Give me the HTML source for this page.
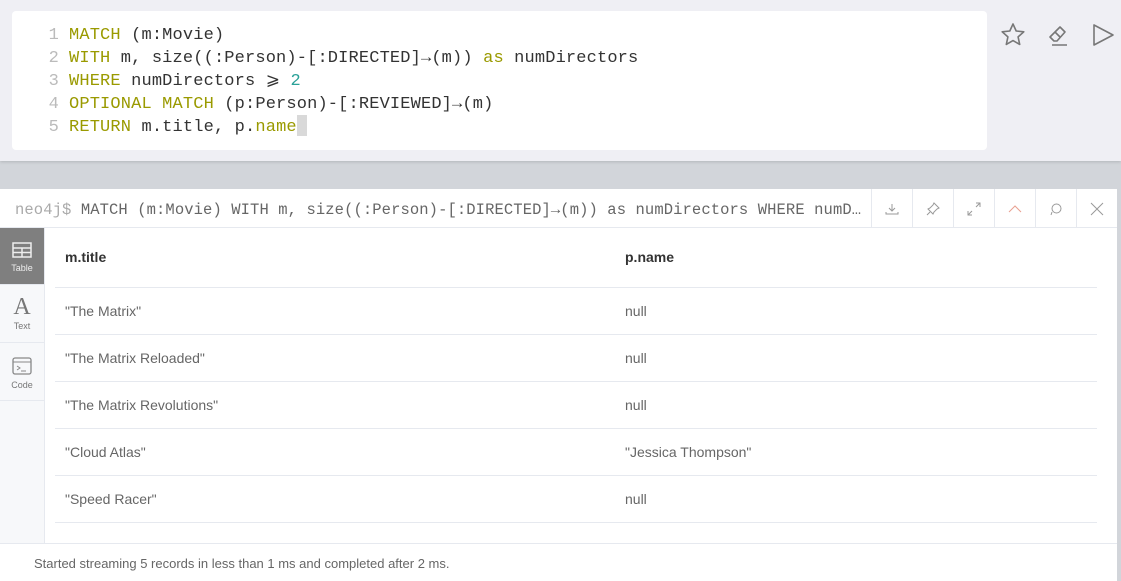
<!DOCTYPE html>
<html><head><meta charset="utf-8"><style>
*{margin:0;padding:0;box-sizing:border-box}
body{width:1121px;height:581px;overflow:hidden;background:#d2d5da;font-family:"Liberation Sans",sans-serif;position:relative}
.top{position:absolute;left:0;top:0;width:1121px;height:161px;background:#efeff4;box-shadow:0 1px 3px rgba(0,0,0,.15)}
.ed{position:absolute;left:12px;top:11px;width:975px;height:139px;background:#fff;border-radius:4px}
.code{position:absolute;left:0;top:13px;font-family:"Liberation Mono",monospace;font-size:17px;line-height:23px;color:#333;white-space:pre;letter-spacing:0.15px}
.ln{display:inline-block;width:57px;text-align:right;color:#bbb;padding-right:10px}
.k{color:#9a9a00}.n{color:#2aa198}
.cur{background:#d9d9d9;display:inline-block;width:10px;height:21px;vertical-align:-5px;margin-top:-4px}
.ic{position:absolute;top:22px}
.card{position:absolute;left:0;top:189px;width:1117px;height:392px;background:#fff}
.hdr{position:absolute;left:0;top:0;width:1117px;height:39px;border-bottom:1px solid #e6e9ef}
.q{position:absolute;left:15px;top:11px;font-family:"Liberation Mono",monospace;font-size:15.5px;color:#666;white-space:nowrap;width:853px;overflow:hidden;text-overflow:ellipsis;letter-spacing:0.1px}
.q span{color:#aaa}
.btn{position:absolute;top:0;width:41px;height:39px;border-left:1px solid #e6e9ef;display:flex;align-items:center;justify-content:center}
.side{position:absolute;left:0;top:39px;width:45px;height:315px;background:#f7f8fa;border-right:1px solid #e6e9ef}
.tab{height:58px;border-bottom:1px solid #e6e9ef;text-align:center;font-size:9px;color:#777;padding-top:14px}
.tab.a{background:#7f7f7f;color:#eee;height:57px}
.tab svg{display:block;margin:0 auto 5px}
table{position:absolute;left:55px;top:39px;width:1042px;border-collapse:collapse;font-size:14px;color:#666}
td,th{text-align:left;padding-left:10px;height:47px;border-bottom:1px solid #e6e9ef}
th{height:59px;color:#333;font-weight:bold}
td:first-child,th:first-child{width:560px}
.foot{position:absolute;left:0;top:354px;width:1117px;height:38px;border-top:1px solid #e6e9ef;font-size:13px;color:#666;padding:12px 0 0 34px}
</style></head><body>
<div class="top">
<div class="ed"><div class="code"><span class="ln">1</span><span class="k">MATCH</span> (m:Movie)
<span class="ln">2</span><span class="k">WITH</span> m, size((:Person)-[:DIRECTED]→(m)) <span class="k">as</span> numDirectors
<span class="ln">3</span><span class="k">WHERE</span> numDirectors ⩾ <span class="n">2</span>
<span class="ln">4</span><span class="k">OPTIONAL MATCH</span> (p:Person)-[:REVIEWED]→(m)
<span class="ln">5</span><span class="k">RETURN</span> m.title, p.<span class="k">name</span><span class="cur"></span></div></div>
<svg class="ic" style="left:1000px" width="26" height="26" viewBox="0 0 26 26"><path d="M13 2l3.2 7 7.6.8-5.7 5.1 1.6 7.5L13 18.6 6.3 22.4l1.6-7.5L2.2 9.8l7.6-.8z" fill="none" stroke="#777" stroke-width="1.6" stroke-linejoin="round"/></svg>
<svg class="ic" style="left:1045px" width="26" height="26" viewBox="0 0 26 26"><path d="M9 19l-4-4L15 5l5 5-8 9H9zM10 10l5 5M7 23h15" fill="none" stroke="#777" stroke-width="1.6" stroke-linejoin="round"/></svg>
<svg class="ic" style="left:1091px" width="24" height="26" viewBox="0 0 24 26"><path d="M3 3v20l19-10z" fill="none" stroke="#777" stroke-width="1.6" stroke-linejoin="round"/></svg>
</div>
<div class="card">
<div class="hdr"><div class="q"><span>neo4j$</span> MATCH (m:Movie) WITH m, size((:Person)-[:DIRECTED]→(m)) as numDirectors WHERE numDirectors ⩾ 2 OPTIONAL MATCH (p:Person)-[:REVIEWED]→(m) RETURN m.title, p.name</div>
<div class="btn" style="left:871px"><svg width="14" height="14"><path d="M7 2v7M4 6l3 3 3-3M1 10v2h12v-2" fill="none" stroke="#999"/></svg></div>
<div class="btn" style="left:912px"><svg width="14" height="14"><path d="M8 1l5 5-2 1-3 3-1 2-5-5 2-1 3-3zM4 10l-3 3" fill="none" stroke="#999"/></svg></div>
<div class="btn" style="left:953px"><svg width="14" height="14"><path d="M9 1h4v4M13 1L9 5M5 13H1V9M1 13l4-4" fill="none" stroke="#999"/></svg></div>
<div class="btn" style="left:994px"><svg width="14" height="14"><path d="M1 10l6-6 6 6" fill="none" stroke="#e8a090"/></svg></div>
<div class="btn" style="left:1035px"><svg width="14" height="14"><circle cx="7.5" cy="6.5" r="4.5" fill="none" stroke="#999"/><path d="M3 10l-1 3" stroke="#999"/></svg></div>
<div class="btn" style="left:1076px"><svg width="14" height="14"><path d="M1 1l12 12M13 1L1 13" stroke="#999"/></svg></div>
</div>
<div class="side">
<div class="tab a"><svg width="20" height="16"><rect x="1" y="1" width="18" height="14" fill="none" stroke="#eee" stroke-width="1.5"/><path d="M1 6h18M1 10.5h18M10 6v9" stroke="#eee" stroke-width="1.5"/></svg>Table</div>
<div class="tab" style="padding-top:10px"><div style="font-family:'Liberation Serif',serif;font-size:24px;line-height:24px;color:#777;margin-bottom:2px">A</div>Text</div>
<div class="tab"><svg width="20" height="18"><rect x="1" y="1" width="18" height="16" rx="2" fill="none" stroke="#888" stroke-width="1.3"/><path d="M1 5h18M5 9l3 2-3 2M9 14h5" fill="none" stroke="#888"/></svg>Code</div>
</div>
<table>
<tr><th>m.title</th><th>p.name</th></tr>
<tr><td>"The Matrix"</td><td>null</td></tr>
<tr><td>"The Matrix Reloaded"</td><td>null</td></tr>
<tr><td>"The Matrix Revolutions"</td><td>null</td></tr>
<tr><td>"Cloud Atlas"</td><td>"Jessica Thompson"</td></tr>
<tr><td>"Speed Racer"</td><td>null</td></tr>
</table>
<div class="foot">Started streaming 5 records in less than 1 ms and completed after 2 ms.</div>
</div>
</body></html>
